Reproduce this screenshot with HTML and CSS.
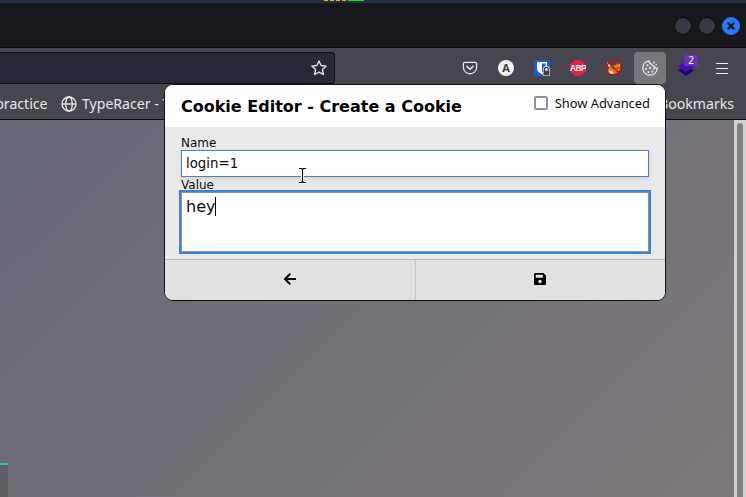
FILE: index.html
```
<!DOCTYPE html>
<html lang="en">
<head>
<meta charset="utf-8">
<title>Cookie Editor</title>
<link rel="stylesheet" href="styles.css">
</head>
<body>
<div class="desktop-panel"><span class="meter"><i></i><i></i><i></i><i></i><b></b></span></div>
<header class="titlebar">
  <span class="win-btn"></span>
  <span class="win-btn"></span>
  <span class="win-btn close"><svg width="10" height="10" viewBox="0 0 10 10"><path d="M1.8 1.8l6.4 6.4M8.2 1.8L1.8 8.2" stroke="#10131a" stroke-width="2.2"/></svg></span>
</header>
<nav class="toolbar">
  <div class="urlbar">
    <svg width="16" height="16" viewBox="0 0 16 16"><path d="M8 .9l2.1 4.6 5.1.6-3.8 3.4 1 5L8 12.1l-4.4 2.4 1-5L.8 6.1l5.1-.6z" fill="none" stroke="#e9e9ec" stroke-width="1.3" stroke-linejoin="round"/></svg>
  </div>
  <div class="tools">
    <span class="tool"><svg width="16" height="16" viewBox="0 0 16 16" fill="none" stroke="#ececee" stroke-linecap="round"><path d="M2.8 2.4h10.4c.8 0 1.4.6 1.4 1.4v3.5c0 3.7-2.9 6.5-6.6 6.5s-6.6-2.8-6.6-6.5V3.8c0-.8.6-1.4 1.4-1.4z" stroke-width="1.2"/><path d="M4.8 6.3L8 9.3l3.2-3" stroke-width="1.5"/></svg></span>
    <span class="tool"><span class="letter">A</span></span>
    <span class="tool"><svg width="16" height="16" viewBox="0 0 16 16"><rect width="16" height="16" rx="1" fill="#175ddc"/><path d="M3 2h10v6.5c0 3-2.8 4.7-5 5.8-2.2-1.1-5-2.8-5-5.8z" fill="#fff"/><path d="M8 3.6h3.5v4.8c0 1.7-1.6 3-3.5 4z" fill="#175ddc"/><rect x="8.7" y="9.7" width="7.3" height="6.3" rx="1" fill="#f2f2f2"/><path d="M10.5 11V9.2c0-2.5 3.8-2.5 3.8 0V11" fill="none" stroke="#f2f2f2" stroke-width="2.6"/><path d="M10.5 11V9.2c0-2.5 3.8-2.5 3.8 0V11" fill="none" stroke="#3e3e40" stroke-width="1.3"/><rect x="9.4" y="10.7" width="6" height="4.7" fill="#3e3e40"/></svg></span>
    <span class="tool"><span class="abp">ABP</span></span>
    <span class="tool"><svg width="16" height="16" viewBox="0 0 16 16"><path d="M1 2.5l4 3 3.5-.2L13 3l1.5 2.3-.8 2.2 1 1.7-3.2 3.2L8 14l-5-.8-1.5-2.6 1.6-2.5z" fill="#e5780b"/><path d="M1.3 2.2L4.7 5 2.5 7zM13.5 3l1.4 2-2 1z" fill="#eee8df"/><path d="M3 10.5l3 .2 2 2.5-3 1-2.5-1.3z" fill="#f6ddc0"/><path d="M6 8h2M11 8.3h1.4" stroke="#492008"/><circle cx="8" cy="8" r="7.3" fill="none" stroke="#c60e13" stroke-width="1.2"/><path d="M2.8 2.8l10.4 10.4" stroke="#c60e13" stroke-width="1.3"/></svg></span>
    <span class="tool active"><svg width="16" height="16" viewBox="0 0 16 16"><path d="M7.2.9C3.5 1.3.8 4.2.8 8c0 4 3.2 7.2 7.2 7.2s7.2-3.2 7.2-7c-1.5.2-2.6-.6-2.8-2-1.3.2-2.4-.6-2.6-2C8.2 4 7.2 2.6 7.2.9z" fill="none" stroke="#e8e8ea" stroke-width="1.3" stroke-linejoin="round"/><g fill="#e8e8ea"><circle cx="5.5" cy="5.3" r="1.1"/><circle cx="4" cy="8.8" r="1.1"/><circle cx="8" cy="8" r="1.2"/><circle cx="6.4" cy="12" r="1.1"/><circle cx="10.3" cy="11.6" r="1.1"/><circle cx="11.8" cy="8.7" r="1"/><circle cx="12" cy="2.5" r=".9"/><circle cx="14.3" cy="4.5" r=".7"/></g></svg></span>
    <span class="tool"><svg width="16" height="16" viewBox="0 0 16 16"><path d="M8 5.5l8 5-8 5.5-8-5.5z" fill="#1b0675"/><path d="M8 1l8 5.5L8 12 0 6.5z" fill="#4a0bb0"/></svg><span class="badge">2</span></span>
    <span class="tool"><svg width="12" height="11" viewBox="0 0 12 11"><path d="M0 .5h12M0 5.5h12M0 10.5h12" stroke="#f0f0f2" stroke-width="1"/></svg></span>
  </div>
</nav>
<div class="bookmarks">
  <span class="bm-practice">practice</span>
  <svg class="globe" width="16" height="16" viewBox="0 0 16 16" fill="none" stroke="#e9e9ec" stroke-width="1.3"><circle cx="8" cy="8" r="7"/><ellipse cx="8" cy="8" rx="3.3" ry="7"/><path d="M1 8h14"/></svg>
  <span>TypeRacer - T</span>
  <span class="bm-other">Bookmarks</span>
</div>
<main class="page">
  <div class="site"><div class="site-card"></div></div>
  <div class="scrollbar"><div class="thumb"></div></div>
</main>
<section class="popup">
  <div class="popup-head">
    <h1>Cookie Editor - Create a Cookie</h1>
    <label class="advanced"><span class="check"></span>Show Advanced</label>
  </div>
  <div class="popup-body">
    <div class="label">Name</div>
    <div class="field">login=1</div>
    <div class="label value-label">Value</div>
    <div class="area">hey<span class="caret"></span></div>
  </div>
  <div class="popup-foot">
    <div class="action"><svg width="14" height="14" viewBox="0 0 14 14"><path d="M7.2 1.8L2 7l5.2 5.2M2.3 7H13" fill="none" stroke="#000" stroke-width="2"/></svg></div>
    <div class="action"><svg width="12" height="12" viewBox="0 0 12 12"><path fill-rule="evenodd" d="M1 0h8.5L12 2.5V11a1 1 0 0 1-1 1H1a1 1 0 0 1-1-1V1a1 1 0 0 1 1-1zM1.8 1.8v3h7v-3zM6 6.8a1.8 1.8 0 1 0 0 3.6 1.8 1.8 0 0 0 0-3.6z"/></svg></div>
  </div>
</section>
<svg class="pointer" width="9" height="17" viewBox="0 0 9 17" fill="none"><path d="M1 1.5h2.5l1 1 1-1H8M4.5 2v13M1 15.5h2.5l1-1 1 1H8" stroke="#fff" stroke-width="3"/><path d="M1 1.5h2.5l1 1 1-1H8M4.5 2v13M1 15.5h2.5l1-1 1 1H8" stroke="#000" stroke-width="1.1"/></svg>
</body>
</html>
```
FILE: styles.css
```
* { box-sizing: border-box; }
body { margin: 0; width: 746px; height: 497px; overflow: hidden; display: flex; flex-direction: column; background: #17181c; font-family: "Noto Sans", sans-serif; }
svg { display: block; flex: none; }
.desktop-panel { flex: none; height: 3px; background: #223044; padding-left: 324px; }
.meter { display: flex; height: 1px; gap: 2px; }
.meter i { width: 4px; background: #f0b010; }
.meter b { width: 16px; background: #00f000; }
.titlebar { flex: none; height: 45px; background: linear-gradient(#16181d, #19191c); border-bottom: 1px solid #0b0b0d; display: flex; justify-content: flex-end; align-items: center; gap: 6px; padding: 1px 6px 0 0; }
.win-btn { width: 18px; height: 18px; border-radius: 50%; background: #353a46; border: 1px solid #08090b; display: flex; align-items: center; justify-content: center; }
.close { background: #2777ff; border-color: #2777ff; }
.toolbar { flex: none; height: 40px; background: #46464f; display: flex; justify-content: space-between; align-items: center; padding-right: 6px; }
.urlbar { width: 335px; height: 32px; background: #282a36; border: 1px solid #0f1014; border-left: 0; border-radius: 0 4px 4px 0; display: flex; align-items: center; justify-content: flex-end; padding-right: 7px; }
.tools { display: flex; }
.tool { position: relative; width: 36px; height: 32px; display: flex; align-items: center; justify-content: center; }
.active::before { content: ""; position: absolute; inset: 0 2px; border-radius: 4px; background: #76777c; }
.active svg { position: relative; }
.letter { width: 16px; height: 16px; border-radius: 50%; background: #f2f2f0; color: #3b3b42; font: bold 11px/16px "Open Sans", sans-serif; text-align: center; }
.abp { width: 16px; height: 16px; display: flex; justify-content: center; background: #ed1e45; color: #fff; font: bold 8.5px/17px "Liberation Sans", sans-serif; letter-spacing: -.6px; clip-path: polygon(30% 0, 70% 0, 100% 30%, 100% 70%, 70% 100%, 30% 100%, 0 70%, 0 30%); }
.badge { position: absolute; left: 16px; top: 3px; width: 14px; height: 11px; border-radius: 1px; background: #6633b9; color: #fff; font-size: 10px; line-height: 11px; text-align: center; }
.bookmarks { flex: none; height: 32px; background: #46464f; border-bottom: 1px solid #0d0d10; display: flex; align-items: center; padding-right: 12px; color: #e6e6e9; font-size: 14.1px; line-height: 20px; white-space: nowrap; }
.bm-practice { width: 47.5px; display: flex; justify-content: flex-end; }
.globe { margin: 0 5.5px 0 13px; }
.bm-other { margin-left: auto; }
.page { flex: 1; min-height: 0; display: flex; background: linear-gradient(135deg, #666775 0%, #716f77 43%, #7e777b 100%); }
.site { flex: 1; display: flex; align-items: flex-end; }
.site-card { width: 8px; height: 34px; background: #5d5d62; border-top: 2px solid #00d4b4; }
.scrollbar { width: 12px; background: #d0d0d0; padding: 3px 3px 0; display: flex; }
.thumb { flex: 1; border-radius: 3px 3px 0 0; background: #7d8280; }
.popup { position: absolute; left: 164px; top: 84px; width: 502px; height: 217px; border: 1px solid #101114; border-radius: 9px; overflow: hidden; background: #e9e9e9; color: #0c0c0d; font-family: "DejaVu Sans", sans-serif; display: flex; flex-direction: column; }
.popup-head { height: 42px; background: #fff; display: flex; justify-content: space-between; padding: 0 15px 0 16px; }
h1 { margin: 0; font-size: 16px; line-height: 44px; color: #000; white-space: nowrap; }
.advanced { display: flex; align-items: center; gap: 7px; height: 36px; font: 12.9px "Noto Sans", sans-serif; white-space: nowrap; }
.check { width: 14px; height: 14px; border: 2px solid #8f8f9d; border-radius: 2px; background: #fff; }
.popup-body { height: 132px; padding: 8px 16px 0; }
.label { height: 15px; font-size: 12px; line-height: 17px; }
.value-label { height: 14px; }
.field { height: 27px; border: 1px solid #4a7fc8; background: #fff; padding-left: 4px; font-size: 13.33px; line-height: 25px; box-shadow: 0 2px 5px rgba(0,0,0,.1); }
.area { margin-top: 1px; height: 60px; border: 1px solid #8f8f9d; outline: 2px solid #3584e4; background: #fff; padding: 4px; font-size: 16px; line-height: 20px; display: flex; }
.caret { width: 1px; height: 19px; background: #000; }
.popup-foot { height: 41px; border-top: 1px solid #bdbdbd; background: #e1e1e1; display: flex; }
.action { width: 250px; display: flex; align-items: center; justify-content: center; padding-bottom: 2px; }
.action + .action { border-left: 1px solid #c7c7c7; padding-right: 2px; }
.pointer { position: absolute; left: 298px; top: 167px; }
```
